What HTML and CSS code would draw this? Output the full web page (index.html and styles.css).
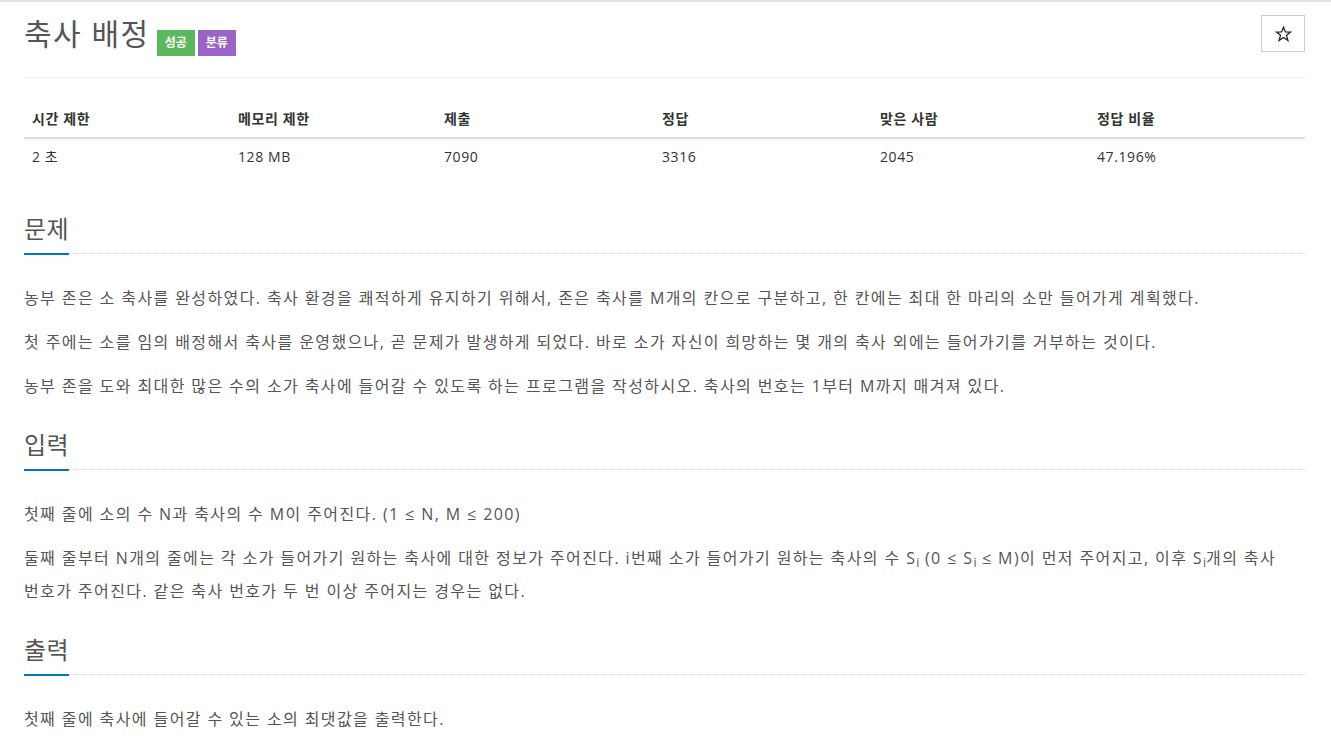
FILE: index.html
```html
<!DOCTYPE html>
<html lang="ko">
<head>
    <meta charset="UTF-8">
    <meta name="viewport" content="width=device-width, initial-scale=1.0">
    <title>축사 배정</title>
    <link rel="stylesheet" href="styles.css">
</head>
<body>
    <div class="container">
        <div class="page-header">
            <h1 class="title">
                <span class="title-text">축사 배정</span>
                <span class="label label-success">성공</span>
                <span class="label label-purple">분류</span>
            </h1>
            <button class="btn-star" type="button" aria-label="즐겨찾기">
                <svg width="17" height="16" viewBox="0 0 17 16">
                    <path d="M8.5 1.2 L10.4 5.9 L15.6 6.1 L11.5 9.3 L12.9 14.4 L8.5 11.5 L4.1 14.4 L5.5 9.3 L1.4 6.1 L6.6 5.9 Z" fill="none" stroke="#222" stroke-width="1.3" stroke-linejoin="miter"/>
                </svg>
            </button>
        </div>

        <table class="problem-info">
            <thead>
                <tr>
                    <th>시간 제한</th>
                    <th>메모리 제한</th>
                    <th>제출</th>
                    <th>정답</th>
                    <th>맞은 사람</th>
                    <th>정답 비율</th>
                </tr>
            </thead>
            <tbody>
                <tr>
                    <td>2 초</td>
                    <td>128 MB</td>
                    <td>7090</td>
                    <td>3316</td>
                    <td>2045</td>
                    <td>47.196%</td>
                </tr>
            </tbody>
        </table>

        <section class="problem-section">
            <div class="headline"><h2>문제</h2></div>
            <div class="problem-text">
                <p>농부 존은 소 축사를 완성하였다. 축사 환경을 쾌적하게 유지하기 위해서, 존은 축사를 M개의 칸으로 구분하고, 한 칸에는 최대 한 마리의 소만 들어가게 계획했다.</p>
                <p>첫 주에는 소를 임의 배정해서 축사를 운영했으나, 곧 문제가 발생하게 되었다. 바로 소가 자신이 희망하는 몇 개의 축사 외에는 들어가기를 거부하는 것이다.</p>
                <p>농부 존을 도와 최대한 많은 수의 소가 축사에 들어갈 수 있도록 하는 프로그램을 작성하시오. 축사의 번호는 1부터 M까지 매겨져 있다.</p>
            </div>
        </section>

        <section class="problem-section">
            <div class="headline"><h2>입력</h2></div>
            <div class="problem-text">
                <p>첫째 줄에 소의 수 N과 축사의 수 M이 주어진다. (1 ≤ N, M ≤ 200)</p>
                <p>둘째 줄부터 N개의 줄에는 각 소가 들어가기 원하는 축사에 대한 정보가 주어진다. i번째 소가 들어가기 원하는 축사의 수 S<sub>i</sub> (0 ≤ S<sub>i</sub> ≤ M)이 먼저 주어지고, 이후 S<sub>i</sub>개의 축사 번호가 주어진다. 같은 축사 번호가 두 번 이상 주어지는 경우는 없다.</p>
            </div>
        </section>

        <section class="problem-section">
            <div class="headline"><h2>출력</h2></div>
            <div class="problem-text">
                <p>첫째 줄에 축사에 들어갈 수 있는 소의 최댓값을 출력한다.</p>
            </div>
        </section>
    </div>
</body>
</html>
```

FILE: styles.css
```css
body {
    font-family: "Open Sans", "Noto Sans CJK KR", sans-serif;
    margin: 0;
    border-top: 2px solid #e3e3e3;
    color: #333;
    font-size: 14px;
    line-height: 1.42857;
    background: #fff;
}
.container {
    padding: 0 26px 40px 24px;
}
.page-header {
    display: flex;
    justify-content: space-between;
    align-items: flex-start;
    padding-top: 13px;
    padding-bottom: 21px;
    border-bottom: 1px solid #eee;
}
.title {
    display: flex;
    align-items: flex-start;
    gap: 3px;
    margin: 0;
    font-size: 30px;
    font-weight: 400;
    line-height: 38px;
    color: #555;
}
.title-text {
    margin-right: 4px;
    letter-spacing: 1.5px;
}
.label {
    display: inline-block;
    margin-top: 15px;
    padding: 0 8px;
    height: 26px;
    line-height: 26px;
    font-size: 12px;
    font-weight: 700;
    color: #fff;
}
.label-success {
    background-color: #5cb85c;
}
.label-purple {
    background-color: #9b63c8;
}
.btn-star {
    display: flex;
    align-items: center;
    justify-content: center;
    width: 44px;
    height: 37px;
    border: 1px solid #ccc;
    background: #fff;
    padding: 0;
}
.problem-info {
    width: 100%;
    border-collapse: collapse;
    margin-top: 23px;
    margin-bottom: 39px;
    table-layout: fixed;
    letter-spacing: 0.6px;
}
.problem-info th,
.problem-info td {
    box-sizing: border-box;
    text-align: left;
    padding: 8px;
    line-height: 20px;
}
.problem-info th {
    font-weight: 700;
    border-bottom: 2px solid #ddd;
}
.problem-info th:nth-child(1),
.problem-info th:nth-child(2) { width: 16.08%; }
.problem-info th:nth-child(3),
.problem-info th:nth-child(4) { width: 17.02%; }
.problem-info th:nth-child(5) { width: 16.94%; }
.problem-info td {
    border-bottom: 1px solid transparent;
}
.problem-section + .problem-section {
    margin-top: 28px;
}
.headline {
    display: flex;
    align-items: flex-end;
}
.headline h2 {
    margin: 0;
    padding-bottom: 10px;
    font-size: 24px;
    font-weight: 400;
    line-height: 28px;
    letter-spacing: 0.5px;
    color: #555;
    border-bottom: 2px solid #0076c0;
}
.headline::after {
    content: '';
    flex: 1;
    margin-bottom: 1px;
    border-bottom: 1px dotted #ddd;
}
.problem-text {
    padding-top: 27px;
    font-size: 16px;
    line-height: 33px;
    letter-spacing: 1.4px;
    word-break: keep-all;
    color: #555;
}
.problem-text p {
    margin: 0 0 11px;
}
.problem-text p:last-child {
    margin-bottom: 0;
}
sub {
    font-size: 75%;
    line-height: 0;
    letter-spacing: 0;
    vertical-align: baseline;
    position: relative;
    bottom: -0.25em;
}
```
